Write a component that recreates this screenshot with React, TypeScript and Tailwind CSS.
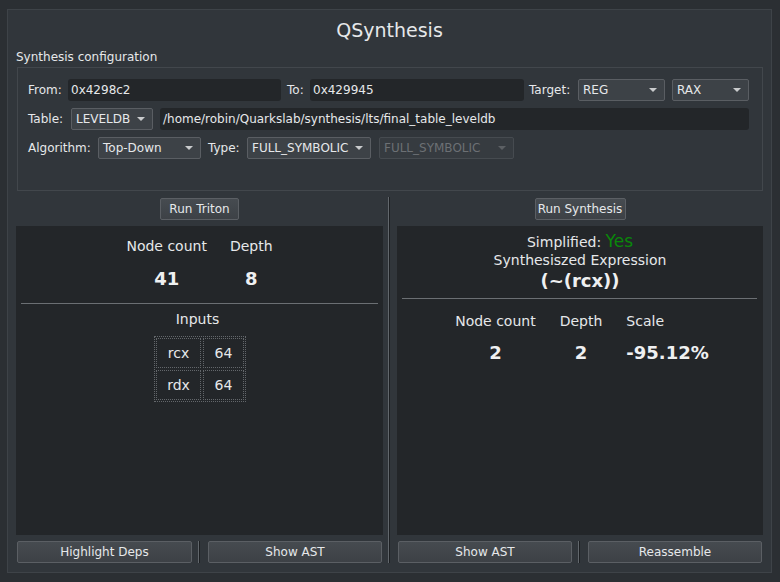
import React from "react";

const font = { fontFamily: '"DejaVu Sans", "Noto Sans", sans-serif' };

function Combo({ w, text, disabled }: { w: string; text: string; disabled?: boolean }) {
  return (
    <div
      className={`${w} h-[22px] flex items-center justify-between pl-[4px] pr-[7px] rounded-[2px] border ${
        disabled ? "border-[#464b50] bg-[#363b40] text-[#6c7074]" : "border-[#5a5e63] bg-[#3d4247] text-[#e6e8ea]"
      }`}
    >
      <span className="text-[12px] leading-none whitespace-nowrap">{text}</span>
      <span
        className={`w-0 h-0 border-l-[4px] border-r-[4px] border-t-[4px] border-l-transparent border-r-transparent ${
          disabled ? "border-t-[#5c6064]" : "border-t-[#c9cbcd]"
        }`}
      />
    </div>
  );
}

function Input({ w, text }: { w: string; text: string }) {
  return (
    <div className={`${w} h-[22px] flex items-center pl-[3px] rounded-[3px] bg-[#232629] text-[#e6e8ea]`}>
      <span className="text-[12px] leading-none whitespace-nowrap">{text}</span>
    </div>
  );
}

function Button({ w, text }: { w: string; text: string }) {
  return (
    <div
      className={`${w} h-[22px] flex items-center justify-center rounded-[2px] border border-[#5b5f64] bg-gradient-to-b from-[#464b50] to-[#3d4146] text-[#e6e8ea] text-[12px]`}
    >
      {text}
    </div>
  );
}

function VSep({ h }: { h: string }) {
  return <div className={`${h} w-[2px] border-l border-l-[#62676c] border-r border-r-[#1d2023]`} />;
}

export default function App() {
  return (
    <div style={font} className="w-[780px] h-[582px] bg-[#2b2f33] pt-[9px] pl-[7px] pr-[8px] text-[#e6e8ea]">
      <div className="w-[765px] h-[564px] border border-[#3e4348] bg-[#31363b] flex flex-col">
        <div className="h-[40px] flex items-center justify-center text-[19px]">QSynthesis</div>
        <div className="h-[14px] flex items-center ml-[8px] text-[12px]">Synthesis configuration</div>
        <div className="ml-[9px] mt-[3px] w-[746px] h-[124px] border border-[#42474c] pt-[11px] pl-[10px] flex flex-col gap-[7px] text-[12px]">
          <div className="flex items-center h-[22px]">
            <span className="w-[40px]">From:</span>
            <Input w="w-[213px]" text="0x4298c2" />
            <span className="w-[29px] pl-[6px]">To:</span>
            <Input w="w-[214px]" text="0x429945" />
            <span className="w-[54px] pl-[5px]">Target:</span>
            <Combo w="w-[87px]" text="REG" />
            <div className="ml-[7px]">
              <Combo w="w-[77px]" text="RAX" />
            </div>
          </div>
          <div className="flex items-center h-[22px]">
            <span className="w-[43px]">Table:</span>
            <Combo w="w-[82px]" text="LEVELDB" />
            <div className="ml-[7px]">
              <Input w="w-[589px]" text="/home/robin/Quarkslab/synthesis/lts/final_table_leveldb" />
            </div>
          </div>
          <div className="flex items-center h-[22px]">
            <span className="w-[70px]">Algorithm:</span>
            <Combo w="w-[103px]" text="Top-Down" />
            <span className="w-[46px] pl-[7px]">Type:</span>
            <Combo w="w-[124px]" text="FULL_SYMBOLIC" />
            <div className="ml-[8px]">
              <Combo w="w-[135px]" text="FULL_SYMBOLIC" disabled />
            </div>
          </div>
        </div>

        <div className="flex pl-[8px]">
          {/* Left column */}
          <div className="w-[367px] flex flex-col">
            <div className="mt-[7px] flex justify-center">
              <Button w="w-[79px]" text="Run Triton" />
            </div>
            <div className="mt-[6px] h-[309px] bg-[#232629] flex flex-col items-center">
              <div className="mt-[10px] flex gap-[23px]">
                <div className="flex flex-col items-center">
                  <div className="h-[20px] flex items-center text-[14px]">Node count</div>
                  <div className="mt-[10px] h-[24px] flex items-center text-[18px] font-bold text-[#eff0f1]">41</div>
                </div>
                <div className="flex flex-col items-center">
                  <div className="h-[20px] flex items-center text-[14px]">Depth</div>
                  <div className="mt-[10px] h-[24px] flex items-center text-[18px] font-bold text-[#eff0f1]">8</div>
                </div>
              </div>
              <div className="mt-[13px] self-stretch mx-[5px] h-px bg-[#6b6f73]" />
              <div className="mt-[6px] h-[18px] flex items-center text-[14px] pr-[4px]">Inputs</div>
              <div className="mt-[8px] ml-[1px] border border-dotted border-[#63676b] p-[1px] grid grid-cols-[45px_41px] gap-[2px] text-[14px]">
                <div className="h-[30px] border border-dotted border-[#63676b] flex items-center justify-center">rcx</div>
                <div className="h-[30px] border border-dotted border-[#63676b] flex items-center justify-center">64</div>
                <div className="h-[30px] border border-dotted border-[#63676b] flex items-center justify-center">rdx</div>
                <div className="h-[30px] border border-dotted border-[#63676b] flex items-center justify-center">64</div>
              </div>
            </div>
            <div className="mt-[6px] flex items-center">
              <div className="ml-[1px]">
                <Button w="w-[175px]" text="Highlight Deps" />
              </div>
              <div className="ml-[6px]">
                <VSep h="h-[22px]" />
              </div>
              <div className="ml-[8px]">
                <Button w="w-[174px]" text="Show AST" />
              </div>
            </div>
          </div>

          <div className="ml-[5px] mt-[6px]">
            <VSep h="h-[366px]" />
          </div>

          {/* Right column */}
          <div className="ml-[7px] w-[366px] flex flex-col">
            <div className="mt-[7px] flex justify-center">
              <Button w="w-[91px]" text="Run Synthesis" />
            </div>
            <div className="mt-[6px] h-[309px] bg-[#232629] flex flex-col items-center">
              <div className="mt-[6px] h-[20px] flex items-center text-[14px]">
                Simplified:&nbsp;<span className="text-[17px] text-[#0a870a]">Yes</span>
              </div>
              <div className="h-[17px] flex items-center text-[14px]">Synthesiszed Expression</div>
              <div className="h-[22px] flex items-center text-[18px] font-bold text-[#eff0f1]">(~(rcx))</div>
              <div className="mt-[7px] self-stretch ml-[5px] mr-[6px] h-px bg-[#6b6f73]" />
              <div className="mt-[13px] flex gap-[24px] pl-[4px]">
                <div className="flex flex-col items-center">
                  <div className="h-[18px] flex items-center text-[14px]">Node count</div>
                  <div className="mt-[10px] h-[24px] flex items-center text-[18px] font-bold text-[#eff0f1]">2</div>
                </div>
                <div className="flex flex-col items-center">
                  <div className="h-[18px] flex items-center text-[14px]">Depth</div>
                  <div className="mt-[10px] h-[24px] flex items-center text-[18px] font-bold text-[#eff0f1]">2</div>
                </div>
                <div className="flex flex-col items-start">
                  <div className="h-[18px] flex items-center text-[14px]">Scale</div>
                  <div className="mt-[10px] h-[24px] flex items-center text-[18px] font-bold text-[#eff0f1]">-95.12%</div>
                </div>
              </div>
            </div>
            <div className="mt-[6px] flex items-center">
              <div className="ml-[1px]">
                <Button w="w-[174px]" text="Show AST" />
              </div>
              <div className="ml-[6px]">
                <VSep h="h-[22px]" />
              </div>
              <div className="ml-[8px]">
                <Button w="w-[174px]" text="Reassemble" />
              </div>
            </div>
          </div>
        </div>
      </div>
    </div>
  );
}
